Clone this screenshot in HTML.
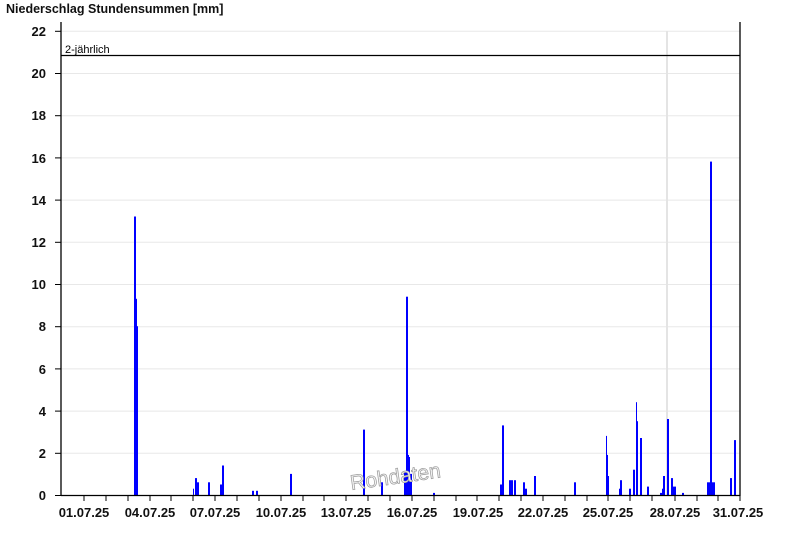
<!DOCTYPE html>
<html><head><style>
html,body{margin:0;padding:0;background:#fff;}
svg{display:block;font-family:"Liberation Sans",Arial,sans-serif;}
</style></head><body>
<svg width="800" height="550" viewBox="0 0 800 550" xmlns="http://www.w3.org/2000/svg">
<text x="6" y="13" font-size="12.5" font-weight="bold" fill="#111">Niederschlag Stundensummen [mm]</text>
<g stroke="#e8e8e8" stroke-width="1">
<line x1="61" x2="740" y1="453.3" y2="453.3"/><line x1="61" x2="740" y1="411.1" y2="411.1"/>
<line x1="61" x2="740" y1="368.9" y2="368.9"/><line x1="61" x2="740" y1="326.7" y2="326.7"/>
<line x1="61" x2="740" y1="284.5" y2="284.5"/><line x1="61" x2="740" y1="242.3" y2="242.3"/>
<line x1="61" x2="740" y1="200.1" y2="200.1"/><line x1="61" x2="740" y1="157.9" y2="157.9"/>
<line x1="61" x2="740" y1="115.7" y2="115.7"/><line x1="61" x2="740" y1="73.5" y2="73.5"/>
<line x1="61" x2="740" y1="31.3" y2="31.3"/>
</g>
<line x1="667" x2="667" y1="31" y2="495" stroke="#e4e4e4" stroke-width="2"/>
<g fill="#0000ff">
<rect x="134" y="216.5" width="2" height="278.5"/>
<rect x="136" y="298.8" width="1" height="196.2"/>
<rect x="137" y="326.2" width="1" height="168.8"/>
<rect x="193" y="488.7" width="1" height="6.3"/>
<rect x="195" y="478.1" width="2" height="16.9"/>
<rect x="197" y="482.3" width="2" height="12.7"/>
<rect x="208" y="482.3" width="2" height="12.7"/>
<rect x="220" y="484.5" width="2" height="10.5"/>
<rect x="222" y="465.5" width="2" height="29.5"/>
<rect x="252" y="490.8" width="2" height="4.2"/>
<rect x="256" y="490.8" width="2" height="4.2"/>
<rect x="290" y="473.9" width="2" height="21.1"/>
<rect x="363" y="429.6" width="2" height="65.4"/>
<rect x="381" y="482.3" width="2" height="12.7"/>
<rect x="404" y="471.8" width="2" height="23.2"/>
<rect x="406" y="296.7" width="2" height="198.3"/>
<rect x="407" y="454.9" width="2" height="40.1"/>
<rect x="408" y="457" width="2" height="38"/>
<rect x="410" y="473.9" width="2" height="21.1"/>
<rect x="433" y="492.9" width="2" height="2.1"/>
<rect x="500" y="484.5" width="2" height="10.5"/>
<rect x="502" y="425.4" width="2" height="69.6"/>
<rect x="509" y="480.2" width="2" height="14.8"/>
<rect x="511" y="480.2" width="2" height="14.8"/>
<rect x="514" y="480.2" width="2" height="14.8"/>
<rect x="523" y="482.3" width="2" height="12.7"/>
<rect x="525" y="488.7" width="2" height="6.3"/>
<rect x="534" y="476" width="2" height="19"/>
<rect x="574" y="482.3" width="2" height="12.7"/>
<rect x="606" y="435.9" width="1" height="59.1"/>
<rect x="607" y="454.9" width="1" height="40.1"/>
<rect x="608" y="476" width="1" height="19"/>
<rect x="619" y="488.7" width="1" height="6.3"/>
<rect x="620" y="480.2" width="2" height="14.8"/>
<rect x="629" y="488.7" width="2" height="6.3"/>
<rect x="633" y="469.7" width="2" height="25.3"/>
<rect x="636" y="402.2" width="1" height="92.8"/>
<rect x="637" y="421.2" width="1" height="73.8"/>
<rect x="640" y="438" width="2" height="57"/>
<rect x="647" y="486.6" width="2" height="8.4"/>
<rect x="660" y="492.9" width="2" height="2.1"/>
<rect x="662" y="488.7" width="1" height="6.3"/>
<rect x="663" y="476" width="2" height="19"/>
<rect x="667" y="419" width="2" height="76"/>
<rect x="671" y="478.1" width="2" height="16.9"/>
<rect x="673" y="486.6" width="3" height="8.4"/>
<rect x="682" y="492.9" width="2" height="2.1"/>
<rect x="707" y="482.3" width="3" height="12.7"/>
<rect x="710" y="161.6" width="2" height="333.4"/>
<rect x="711" y="469.7" width="1" height="25.3"/>
<rect x="712" y="482.3" width="3" height="12.7"/>
<rect x="730" y="478.1" width="2" height="16.9"/>
<rect x="734" y="440.1" width="2" height="54.9"/>
</g>
<line x1="61" x2="740" y1="55.5" y2="55.5" stroke="#000" stroke-width="1.2"/>
<text x="65" y="53" font-size="11" fill="#000">2-jährlich</text>
<text x="349" y="483" font-size="21" fill="#f4f4f4" stroke="#999" stroke-width="0.7" transform="rotate(-8 400 470)">Rohdaten</text>
<g stroke="#000" stroke-width="1.3">
<line x1="61" x2="61" y1="22" y2="496"/>
<line x1="740" x2="740" y1="22" y2="496"/>
<line x1="61" x2="740" y1="495.5" y2="495.5"/>
</g>
<g stroke="#000" stroke-width="1">
<line x1="55" x2="61" y1="495.5" y2="495.5"/><line x1="55" x2="61" y1="453.3" y2="453.3"/>
<line x1="55" x2="61" y1="411.1" y2="411.1"/><line x1="55" x2="61" y1="368.9" y2="368.9"/>
<line x1="55" x2="61" y1="326.7" y2="326.7"/><line x1="55" x2="61" y1="284.5" y2="284.5"/>
<line x1="55" x2="61" y1="242.3" y2="242.3"/><line x1="55" x2="61" y1="200.1" y2="200.1"/>
<line x1="55" x2="61" y1="157.9" y2="157.9"/><line x1="55" x2="61" y1="115.7" y2="115.7"/>
<line x1="55" x2="61" y1="73.5" y2="73.5"/><line x1="55" x2="61" y1="31.3" y2="31.3"/>
<line x1="84" x2="84" y1="495" y2="501"/><line x1="106" x2="106" y1="495" y2="501"/>
<line x1="128" x2="128" y1="495" y2="501"/><line x1="150" x2="150" y1="495" y2="501"/>
<line x1="171" x2="171" y1="495" y2="501"/><line x1="193" x2="193" y1="495" y2="501"/>
<line x1="215" x2="215" y1="495" y2="501"/><line x1="237" x2="237" y1="495" y2="501"/>
<line x1="259" x2="259" y1="495" y2="501"/><line x1="281" x2="281" y1="495" y2="501"/>
<line x1="303" x2="303" y1="495" y2="501"/><line x1="324" x2="324" y1="495" y2="501"/>
<line x1="346" x2="346" y1="495" y2="501"/><line x1="368" x2="368" y1="495" y2="501"/>
<line x1="390" x2="390" y1="495" y2="501"/><line x1="412" x2="412" y1="495" y2="501"/>
<line x1="434" x2="434" y1="495" y2="501"/><line x1="456" x2="456" y1="495" y2="501"/>
<line x1="477" x2="477" y1="495" y2="501"/><line x1="499" x2="499" y1="495" y2="501"/>
<line x1="521" x2="521" y1="495" y2="501"/><line x1="543" x2="543" y1="495" y2="501"/>
<line x1="565" x2="565" y1="495" y2="501"/><line x1="587" x2="587" y1="495" y2="501"/>
<line x1="608" x2="608" y1="495" y2="501"/><line x1="630" x2="630" y1="495" y2="501"/>
<line x1="652" x2="652" y1="495" y2="501"/><line x1="675" x2="675" y1="495" y2="501"/>
<line x1="697" x2="697" y1="495" y2="501"/><line x1="718" x2="718" y1="495" y2="501"/>
<line x1="740" x2="740" y1="495" y2="501"/>
</g>
<g font-size="13" font-weight="bold" fill="#111" text-anchor="end">
<text x="46" y="500">0</text><text x="46" y="458">2</text><text x="46" y="416">4</text>
<text x="46" y="374">6</text><text x="46" y="331">8</text><text x="46" y="289">10</text>
<text x="46" y="247">12</text><text x="46" y="205">14</text><text x="46" y="163">16</text>
<text x="46" y="120">18</text><text x="46" y="78">20</text><text x="46" y="36">22</text>
</g>
<g font-size="13" font-weight="bold" fill="#111" text-anchor="middle">
<text x="84" y="517">01.07.25</text><text x="150" y="517">04.07.25</text><text x="215" y="517">07.07.25</text>
<text x="281" y="517">10.07.25</text><text x="346" y="517">13.07.25</text><text x="412" y="517">16.07.25</text>
<text x="478" y="517">19.07.25</text><text x="543" y="517">22.07.25</text><text x="608" y="517">25.07.25</text>
<text x="675" y="517">28.07.25</text><text x="738" y="517">31.07.25</text>
</g>
</svg>
</body></html>
